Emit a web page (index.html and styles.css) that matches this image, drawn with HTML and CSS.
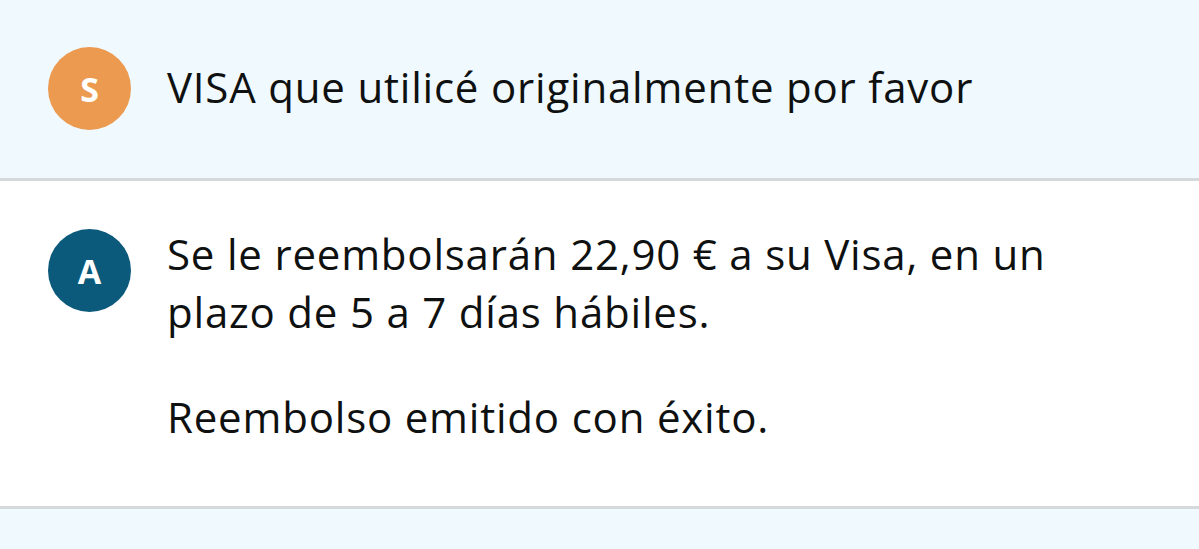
FILE: index.html
```html
<!DOCTYPE html>
<html lang="es">
<head>
<meta charset="utf-8">
<link rel="stylesheet" href="styles.css">
</head>
<body>
<div class="chat">
  <section class="msg msg-user">
    <div class="avatar avatar-s">S</div>
    <div class="body">
      <p class="line">VISA que utilicé originalmente por favor</p>
    </div>
  </section>
  <section class="msg msg-agent">
    <div class="avatar avatar-a">A</div>
    <div class="body">
      <p class="para">Se le reembolsarán 22,90 € a su Visa, en un plazo de 5 a 7 días hábiles.</p>
      <p class="para">Reembolso emitido con éxito.</p>
    </div>
  </section>
  <section class="msg msg-next"></section>
</div>
</body>
</html>
```
FILE: styles.css
```css
html, body {
  margin: 0;
  padding: 0;
  background: #ffffff;
}
body {
  font-family: "Open Sans", Lato, sans-serif;
  color: #0f1111;
  font-variant-ligatures: none;
}
.chat {
  display: flex;
  flex-direction: column;
  width: 1199px;
  height: 549px;
  overflow: hidden;
}
.msg {
  display: flex;
  align-items: flex-start;
  gap: 36px;
  padding: 47px 48px 48px 48px;
  border-bottom: 3px solid #d5d9dc;
}
.msg-user {
  background: #eff9fe;
  align-items: center;
}
.msg-agent {
  background: #ffffff;
  padding-top: 48px;
  height: 328px;
  box-sizing: border-box;
}
.msg-next {
  background: #eff9fe;
  border-bottom: none;
  flex: 1;
  padding: 0;
}
.avatar {
  flex: none;
  width: 83px;
  height: 83px;
  border-radius: 50%;
  display: flex;
  align-items: center;
  justify-content: center;
  color: #ffffff;
  font-weight: 700;
  font-size: 34px;
}
.avatar-s { background: #eb9a50; }
.avatar-a { background: #0b5a7b; }
.body {
  flex: 1;
  max-width: 900px;
}
.line, .para {
  margin: 0;
  font-size: 42px;
  line-height: 58px;
  letter-spacing: 0.8px;
}
.line {
  margin-top: -3px;
}
.msg-agent .body {
  margin-top: -4px;
}
.para + .para {
  margin-top: 47px;
}
```
